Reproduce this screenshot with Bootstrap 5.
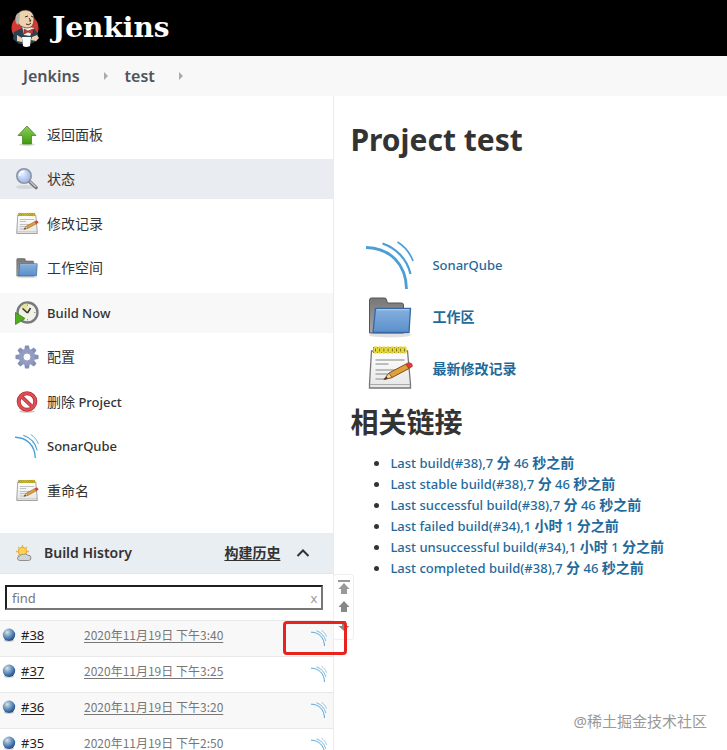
<!DOCTYPE html>
<html lang="zh-CN">
<head>
<meta charset="utf-8">
<meta name="viewport" content="width=device-width, initial-scale=1">
<title>test [Jenkins]</title>
<link href="https://cdn.jsdelivr.net/npm/bootstrap@5.3.0/dist/css/bootstrap.min.css" rel="stylesheet">
<style>
body{font-family:"Noto Sans","Noto Sans CJK SC",sans-serif;font-size:13px;line-height:20px;color:#333;background:#fff}
svg{display:block;flex:none}
a{color:inherit;text-decoration:none}
.top-bar{height:56px;background:#000;padding:0 8px}
.brand-name{font:bold 28px/32px "DejaVu Serif",serif;color:#fff}
.crumbs{height:40px;background:#f8f8f8;padding:0 23px;font-size:16px;font-weight:600;color:#4d545d}
.side-panel{flex:0 0 46%;border-right:1px solid #e8ecef;padding-top:19px}
.task{height:40px;margin-bottom:4px;padding:0 15px;gap:8px;font-weight:500}
.task:nth-child(even){margin-bottom:5px}
.task.is-active{background:#e9edf1}
.task.is-hover{background:#f8f8f8}
.cjk{font-size:14px;font-weight:400}
.history{margin-top:22px}
.history-head{height:41px;background:#e9eef2;border-bottom:1px solid #e3e8ec;padding:0 23px 0 15px;font-size:14px;font-weight:600}
.history-head a{text-decoration:underline;text-underline-offset:2px}
.find-row{padding:11px 10px 10px 5px}
.find-box{border:2px solid #777;border-top-color:#211f20;border-left-color:#211f20;height:25px;background:#fff}
.find-box input{border:0;outline:0;min-width:0;padding:0 5px;font-size:13px;color:#333;background:transparent}
.find-box input::placeholder{color:#777}
.find-box button{border:0;background:none;padding:0 4px;color:#999;line-height:16px}
.builds td{height:36px;padding:5px 0 0;border-top:1px solid #e8e8e8;vertical-align:top;line-height:18px}
.builds tr:nth-child(odd) td{background:#f8f8f8}
.builds a{text-decoration:underline;text-underline-offset:2px}
.builds .col-num{width:84px;color:#222}
.builds .col-date{color:#777;font-family:"Noto Sans CJK SC",sans-serif;font-size:12px}
.builds .col-sonar{width:22px}
.highlight-frame{left:283px;top:88px;width:64px;height:34px;border:3px solid #e8231c;border-radius:4px;z-index:3}
.pager{left:100%;top:41px;width:21px;height:66px;border:1px solid #eee;border-radius:3px;background:#fff;padding:4px 0 0;gap:4px;z-index:2}
.pager button{border:0;background:none;padding:0}
.main-panel{padding:23px 15px 0 16px;min-width:0}
h1{font-size:30px;line-height:42px;font-weight:700;margin:0 0 78px}
h2{font-size:28px;line-height:40px;font-weight:700;margin:7px 0 10px}
.main-panel a{color:#1f6a9b;font-weight:500}
.main-panel a b{font-size:14px;font-weight:700}
.shortcut{height:52px;padding-left:16px;gap:18px}
.permalinks{padding-left:40px}
.permalinks li{height:21px;line-height:21px}
.watermark{right:20px;bottom:18px;font-size:15px;line-height:22px;color:#999}
</style>
<script src="https://cdn.jsdelivr.net/npm/bootstrap@5.3.0/dist/js/bootstrap.bundle.min.js"></script>
</head>
<body class="vh-100 overflow-hidden position-relative d-flex flex-column">
<svg width="0" height="0" class="position-absolute" aria-hidden="true">
<defs>
<linearGradient id="gGreen" x2="0" y2="1"><stop stop-color="#8ed05a"/><stop offset="1" stop-color="#3f9a10"/></linearGradient>
<linearGradient id="gBlue" x2="0" y2="1"><stop stop-color="#86b0de"/><stop offset="1" stop-color="#5b8fcb"/></linearGradient>
<linearGradient id="gGrey" x2="0" y2="1"><stop stop-color="#777"/><stop offset="1" stop-color="#a5a5a5"/></linearGradient>
<linearGradient id="gPaper" x2="0" y2="1"><stop stop-color="#fff"/><stop offset="1" stop-color="#e6e6e6"/></linearGradient>
<radialGradient id="gBall" cx=".36" cy=".3" r=".75"><stop stop-color="#d9e3e7"/><stop offset=".35" stop-color="#87a9c8"/><stop offset=".75" stop-color="#386da9"/><stop offset="1" stop-color="#244775"/></radialGradient>
<radialGradient id="gLens" cx=".4" cy=".35"><stop stop-color="#e8f0ff"/><stop offset="1" stop-color="#a6c0ee"/></radialGradient>
</defs>
<symbol id="i-sonar" viewBox="0 0 48 48"><g fill="none" stroke="#4b9fd5"><path d="M0 6.500C24 7 40 23 40.500 48" stroke-width="2.800"/><path d="M16.500 2.500C30 7 41 18 44.500 33" stroke-width="2.200"/><path d="M31.500 1C38 5 44 12 47 20" stroke-width="1.700"/></g></symbol>
<symbol id="i-folder" viewBox="0 0 48 48"><ellipse cx="24" cy="42" rx="21" ry="2.500" fill="#000" opacity=".12"/><path d="M3.500 40V7q0-2 2-2h13q2 0 2 2l1 3h14q2 0 2 2v28z" fill="url(#gGrey)" stroke="#555"/><path d="M9.500 15.500h35l-1.500 24H7z" fill="url(#gBlue)" stroke="#3568a5" stroke-width="1.300"/><path d="M10.500 16.700h32.700" stroke="#b5d1ef"/></symbol>
<symbol id="i-note" viewBox="0 0 48 48"><path d="M5.500 6h36l3 33v4h-41v-4z" fill="url(#gPaper)" stroke="#777" stroke-width="1.300"/><path d="M4 39.500h40" stroke="#aaa"/><path d="M9.500 15h29M9.500 19h13M9.500 25h24M9.500 29h15M9.500 34h10" stroke="#aaa" stroke-width="1.400"/><path d="M7 5h33" stroke="#635a18" stroke-width="6"/><g fill="none" stroke="#e8d83b" stroke-width="1.900"><ellipse cx="9.500" cy="5" rx="1.400" ry="2.700"/><ellipse cx="13.700" cy="5" rx="1.400" ry="2.700"/><ellipse cx="17.900" cy="5" rx="1.400" ry="2.700"/><ellipse cx="22.100" cy="5" rx="1.400" ry="2.700"/><ellipse cx="26.300" cy="5" rx="1.400" ry="2.700"/><ellipse cx="30.500" cy="5" rx="1.400" ry="2.700"/><ellipse cx="34.700" cy="5" rx="1.400" ry="2.700"/><ellipse cx="38.500" cy="5" rx="1.400" ry="2.700"/></g><path d="M18 34.500l5-6.500 17-9 3 4.500-17 9z" fill="#e0a13b" stroke="#81501c"/><path d="M18 34.500l5-6.500 3 4.500z" fill="#efd5a5" stroke="#81501c" stroke-width=".8"/><path d="M18 34.500l2.500-3 1.400 2z" fill="#333"/><path d="M40 19l2.500-1.300q4 0 4 3.500L43 23.500z" fill="#e43c3c" stroke="#9b3026" stroke-width=".7"/></symbol>
<symbol id="i-ball" viewBox="0 0 14 14"><ellipse cx="7" cy="12.500" rx="5" ry="1.200" fill="#000" opacity=".2"/><circle cx="7" cy="6.800" r="6.200" fill="url(#gBall)"/></symbol>
</svg>

<header class="top-bar d-flex align-items-center flex-shrink-0">
<a href="#" class="d-flex align-items-center gap-2">
<svg width="36" height="40" viewBox="0 0 36 40" role="img" aria-label="Jenkins logo">
<circle cx="17" cy="20" r="13.500" fill="#d33833"/>
<path d="M5 31l1-7 8-4 12 0 4 6-1 7-7 3H11z" fill="#2b4254"/>
<path d="M14 18l2 9 6 1 4-8z" fill="#f4f1e8"/>
<path d="M9 9Q10 2 18 2q8 1 8 9 0 9-7 9-8-1-9-6z" fill="#eed2ae" stroke="#4b3a30" stroke-width=".7"/>
<path d="M8 15Q6 8 10 5l2 1-1 9-1 2z" fill="#b8b2a6"/>
<path d="M17 9l3-1m3 0 2 1M18 16q3 2 5-1M21 10l2 3h-2" stroke="#3c2a22" fill="none"/>
<path d="M16 21l4 2 5-2v5l-5-2-4 2z" fill="#d33833" stroke="#5d1714" stroke-width=".5"/>
<path d="M14 29h9l-1 9q-4 2-7 0z" fill="#fff"/>
<path d="M9 27l5 3v4l-5-1zM24 29l5-2 2 3-3 3-5-1z" fill="#eed2ae"/>
</svg>
<span class="brand-name">Jenkins</span></a>
</header>

<nav class="crumbs d-flex align-items-center flex-shrink-0" aria-label="breadcrumb">
<a href="#" class="me-4">Jenkins</a>
<svg class="me-3" width="5" height="8"><path d="M0 0l4 4-4 4z" fill="#aaa"/></svg>
<a href="#" class="me-4">test</a>
<svg width="5" height="8"><path d="M0 0l4 4-4 4z" fill="#aaa"/></svg>
</nav>

<div class="d-flex flex-grow-1">
<aside class="side-panel">
<nav>
<a href="#" class="task d-flex align-items-center"><svg width="24" height="24" viewBox="0 0 24 24"><ellipse cx="12" cy="21.500" rx="8" ry="1.500" opacity=".15"/><path d="M12 3l9 9.500h-4.500V21h-9v-8.500H3z" fill="url(#gGreen)" stroke="#47891f" stroke-width=".8"/></svg><span class="cjk">返回面板</span></a>
<a href="#" class="task is-active d-flex align-items-center"><svg width="24" height="24" viewBox="0 0 24 24"><ellipse cx="10" cy="20" rx="9" ry="2" opacity=".09"/><path d="M14.500 14.500l6.500 6" stroke="#777" stroke-width="3.600" stroke-linecap="round"/><path d="M15 14.500l6 5.500" stroke="#c9c9c9" stroke-width="1.300"/><circle cx="9" cy="9" r="7.200" fill="url(#gLens)" stroke="#8c93a1" stroke-width="1.600"/><path d="M4.500 9q0-4.500 5-4.500" stroke="#fff" fill="none" stroke-width="1.300"/></svg><span class="cjk">状态</span></a>
<a href="#" class="task d-flex align-items-center"><svg width="24" height="24"><use href="#i-note"/></svg><span class="cjk">修改记录</span></a>
<a href="#" class="task d-flex align-items-center"><svg width="24" height="24"><use href="#i-folder"/></svg><span class="cjk">工作空间</span></a>
<a href="#" class="task is-hover d-flex align-items-center"><svg width="24" height="24" viewBox="0 0 24 24"><circle cx="12.500" cy="11.500" r="10" fill="#f1f1e5" stroke="#777a80" stroke-width="2.400"/><path d="M12.500 11.500L5.500 6q3-4 7-3.500z" fill="#e7e29a"/><path d="M12.500 12l-5-4.500M12.500 12l3-5" stroke="#333" stroke-width="1.500"/><path d="M12.500 3.500v1.500M20.500 11.500H19M12.500 19.500V18" stroke="#999"/><path d="M.5 11.500L10 17.500.5 23.500z" fill="#52ad22" stroke="#398010" stroke-width=".8"/></svg><span>Build Now</span></a>
<a href="#" class="task d-flex align-items-center"><svg width="24" height="24" viewBox="0 0 24 24"><g fill="#858fb8"><path id="tooth" d="M10 .5h4l.8 5H9.200zM10 23.500h4l.8-5H9.200z"/><use href="#tooth" transform="rotate(45 12 12)"/><use href="#tooth" transform="rotate(90 12 12)"/><use href="#tooth" transform="rotate(135 12 12)"/></g><circle cx="12" cy="12" r="6.200" fill="#fff" stroke="#929cc3" stroke-width="4"/><circle cx="12" cy="12" r="4" fill="#fff" stroke="#7983ad" stroke-width=".8"/></svg><span class="cjk">配置</span></a>
<a href="#" class="task d-flex align-items-center"><svg width="24" height="24" viewBox="0 0 24 24"><ellipse cx="12" cy="21.500" rx="8" ry="1.500" opacity=".2"/><circle cx="12" cy="11.500" r="8.300" fill="#fff" stroke="#b72c32" stroke-width="4"/><path d="M6 6l12 11.500" stroke="#b72c32" stroke-width="3.800"/><circle cx="12" cy="11.500" r="8.300" fill="none" stroke="#db5056" stroke-width="2.500"/><path d="M6 6l12 11.500" stroke="#db5056" stroke-width="2.300"/></svg><span><span class="cjk">删除</span> Project</span></a>
<a href="#" class="task d-flex align-items-center"><svg width="24" height="24"><use href="#i-sonar"/></svg><span>SonarQube</span></a>
<a href="#" class="task d-flex align-items-center"><svg width="24" height="24"><use href="#i-note"/></svg><span class="cjk">重命名</span></a>
</nav>

<section class="history position-relative">
<div class="history-head d-flex align-items-center">
<svg class="me-2" width="17" height="17" viewBox="0 0 17 17"><path d="M7.500 0v13M1 6.500h13M3 2l9 9M12 2l-9 9" stroke="#edb64b" stroke-width="1.400"/><circle cx="7.500" cy="6.500" r="4.200" fill="#ffd34c" stroke="#e9a23a"/><path d="M5 15.500q-2.500 0-2.500-2.300 0-2 2.300-2.200Q6 8.500 8.500 9.500q2-1.500 4 .5 3.500 0 3.500 3 0 2.500-2.500 2.500z" fill="#d3d4d5" stroke="#858788" stroke-width=".9"/></svg>
<span class="me-auto ps-1">Build History</span>
<a href="#">构建历史</a>
<button type="button" class="btn p-0 border-0 ms-3 lh-1" aria-label="收起"><svg width="14" height="10" viewBox="0 0 14 10"><path d="M1.500 8L7 2.500 12.500 8" fill="none" stroke="#333" stroke-width="2"/></svg></button>
</div>
<div class="find-row"><div class="find-box d-flex align-items-center"><input class="flex-grow-1" type="text" placeholder="find" aria-label="find"><button type="button" aria-label="清除">x</button></div></div>
<table class="builds w-100"><tbody>
<tr><td class="col-num"><div class="d-flex align-items-center"><svg class="me-1" width="17" height="14" viewBox="-2 0 17 14"><use href="#i-ball" width="14" height="14"/></svg><a href="#">#38</a></div></td><td class="col-date"><a href="#">2020年11月19日 下午3:40</a></td><td class="col-sonar"><a href="#" aria-label="SonarQube"><svg class="mt-1" width="16" height="16"><use href="#i-sonar"/></svg></a></td></tr>
<tr><td class="col-num"><div class="d-flex align-items-center"><svg class="me-1" width="17" height="14" viewBox="-2 0 17 14"><use href="#i-ball" width="14" height="14"/></svg><a href="#">#37</a></div></td><td class="col-date"><a href="#">2020年11月19日 下午3:25</a></td><td class="col-sonar"><a href="#" aria-label="SonarQube"><svg class="mt-1" width="16" height="16"><use href="#i-sonar"/></svg></a></td></tr>
<tr><td class="col-num"><div class="d-flex align-items-center"><svg class="me-1" width="17" height="14" viewBox="-2 0 17 14"><use href="#i-ball" width="14" height="14"/></svg><a href="#">#36</a></div></td><td class="col-date"><a href="#">2020年11月19日 下午3:20</a></td><td class="col-sonar"><a href="#" aria-label="SonarQube"><svg class="mt-1" width="16" height="16"><use href="#i-sonar"/></svg></a></td></tr>
<tr><td class="col-num"><div class="d-flex align-items-center"><svg class="me-1" width="17" height="14" viewBox="-2 0 17 14"><use href="#i-ball" width="14" height="14"/></svg><a href="#">#35</a></div></td><td class="col-date"><a href="#">2020年11月19日 下午2:50</a></td><td class="col-sonar"><a href="#" aria-label="SonarQube"><svg class="mt-1" width="16" height="16"><use href="#i-sonar"/></svg></a></td></tr>
</tbody></table>
<div class="pager position-absolute d-flex flex-column align-items-center">
<button type="button" aria-label="最新"><svg width="12" height="16"><path d="M0 1h12v2H0zM6 4l5.500 6H9v5H3v-5H.5z" fill="#999"/></svg></button>
<button type="button" aria-label="较新"><svg width="12" height="16"><path d="M6 2l5.500 6H9v5H3V8H.5z" fill="#888"/></svg></button>
<button type="button" aria-label="较旧"><svg width="12" height="16"><path d="M6 12L.5 7H4V2h4v5h3.500z" fill="#888"/></svg></button>
</div>
<div class="highlight-frame position-absolute"></div>
</section>
</aside>

<main class="main-panel flex-grow-1">
<h1>Project test</h1>
<a href="#" class="shortcut d-flex align-items-center"><svg width="48" height="48"><use href="#i-sonar"/></svg><span>SonarQube</span></a>
<a href="#" class="shortcut d-flex align-items-center"><svg width="48" height="48"><use href="#i-folder"/></svg><b>工作区</b></a>
<a href="#" class="shortcut d-flex align-items-center"><svg width="48" height="48"><use href="#i-note"/></svg><b>最新修改记录</b></a>
<h2>相关链接</h2>
<ul class="permalinks mb-0">
<li><a href="#">Last build(#38),7 <b>分</b> 46 <b>秒之前</b></a></li>
<li><a href="#">Last stable build(#38),7 <b>分</b> 46 <b>秒之前</b></a></li>
<li><a href="#">Last successful build(#38),7 <b>分</b> 46 <b>秒之前</b></a></li>
<li><a href="#">Last failed build(#34),1 <b>小时</b> 1 <b>分之前</b></a></li>
<li><a href="#">Last unsuccessful build(#34),1 <b>小时</b> 1 <b>分之前</b></a></li>
<li><a href="#">Last completed build(#38),7 <b>分</b> 46 <b>秒之前</b></a></li>
</ul>
</main>
</div>
<div class="watermark position-absolute">@稀土掘金技术社区</div>
</body>
</html>
